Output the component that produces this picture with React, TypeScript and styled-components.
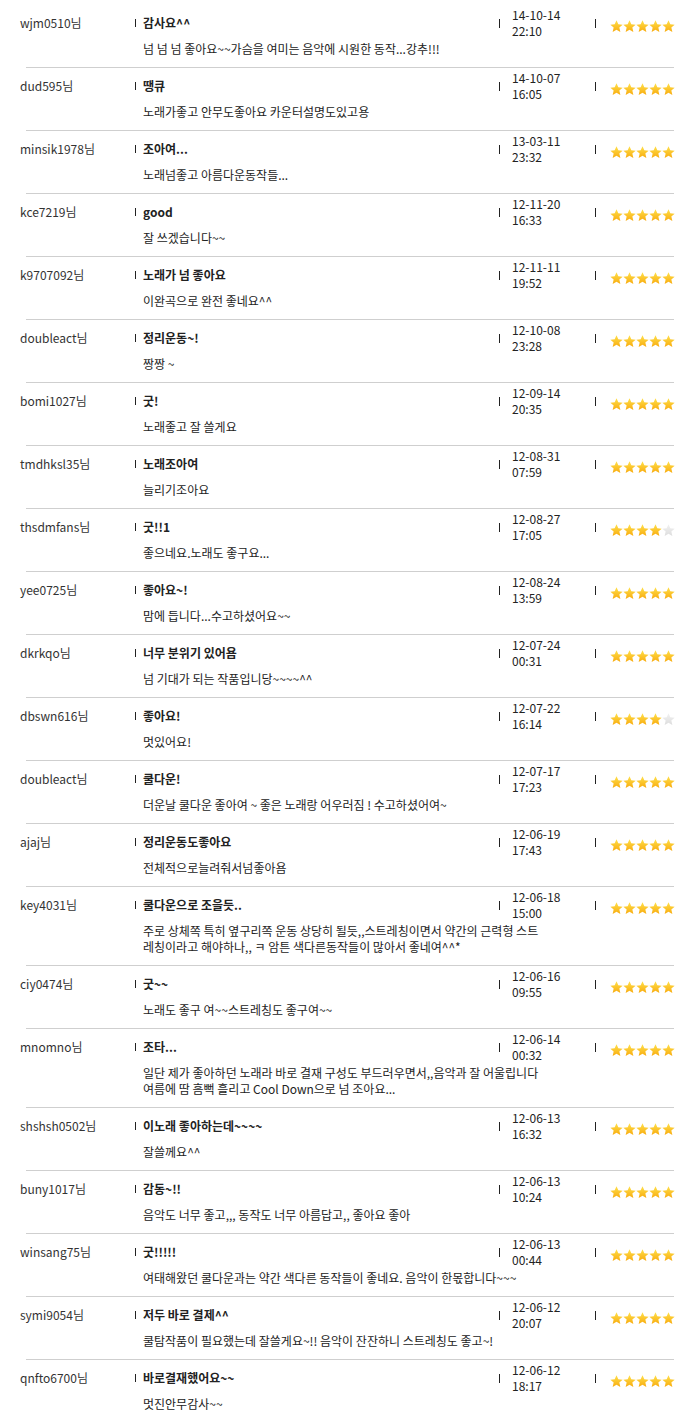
import React from "react";
import styled, { createGlobalStyle } from "styled-components";

const GlobalStyle = createGlobalStyle`
  html, body { margin: 0; padding: 0; background: #fff; }
  body {
    font-family: "Noto Sans CJK KR", "Noto Sans", sans-serif;
    font-size: 12px;
    color: #333;
  }
`;

type Review = {
  user: string;
  title: string;
  date: string;
  time: string;
  stars: number;
  lines: string[];
};

const reviews: Review[] = [
  { user: "wjm0510님", title: "감사요^^", date: "14-10-14", time: "22:10", stars: 5, lines: ["넘 넘 넘 좋아요~~가슴을 여미는 음악에 시원한 동작...강추!!!"] },
  { user: "dud595님", title: "땡큐", date: "14-10-07", time: "16:05", stars: 5, lines: ["노래가좋고 안무도좋아요 카운터설명도있고용"] },
  { user: "minsik1978님", title: "조아여...", date: "13-03-11", time: "23:32", stars: 5, lines: ["노래넘좋고 아름다운동작들..."] },
  { user: "kce7219님", title: "good", date: "12-11-20", time: "16:33", stars: 5, lines: ["잘 쓰겠습니다~~"] },
  { user: "k9707092님", title: "노래가 넘 좋아요", date: "12-11-11", time: "19:52", stars: 5, lines: ["이완곡으로 완전 좋네요^^"] },
  { user: "doubleact님", title: "정리운동~!", date: "12-10-08", time: "23:28", stars: 5, lines: ["짱짱 ~"] },
  { user: "bomi1027님", title: "굿!", date: "12-09-14", time: "20:35", stars: 5, lines: ["노래좋고 잘 쓸게요"] },
  { user: "tmdhksl35님", title: "노래조아여", date: "12-08-31", time: "07:59", stars: 5, lines: ["늘리기조아요"] },
  { user: "thsdmfans님", title: "굿!!1", date: "12-08-27", time: "17:05", stars: 4, lines: ["좋으네요.노래도 좋구요..."] },
  { user: "yee0725님", title: "좋아요~!", date: "12-08-24", time: "13:59", stars: 5, lines: ["맘에 듭니다...수고하셨어요~~"] },
  { user: "dkrkqo님", title: "너무 분위기 있어욤", date: "12-07-24", time: "00:31", stars: 5, lines: ["넘 기대가 되는 작품입니당~~~~^^"] },
  { user: "dbswn616님", title: "좋아요!", date: "12-07-22", time: "16:14", stars: 4, lines: ["멋있어요!"] },
  { user: "doubleact님", title: "쿨다운!", date: "12-07-17", time: "17:23", stars: 5, lines: ["더운날 쿨다운 좋아여 ~ 좋은 노래랑 어우러짐 ! 수고하셨어여~"] },
  { user: "ajaj님", title: "정리운동도좋아요", date: "12-06-19", time: "17:43", stars: 5, lines: ["전체적으로늘려줘서넘좋아욤"] },
  { user: "key4031님", title: "쿨다운으로 조을듯..", date: "12-06-18", time: "15:00", stars: 5, lines: ["주로 상체쪽 특히 옆구리쪽 운동 상당히 될듯,,스트레칭이면서 약간의 근력형 스트", "레칭이라고 해야하나,, ㅋ 암튼 색다른동작들이 많아서 좋네여^^*"] },
  { user: "ciy0474님", title: "굿~~", date: "12-06-16", time: "09:55", stars: 5, lines: ["노래도 좋구 여~~스트레칭도 좋구여~~"] },
  { user: "mnomno님", title: "조타...", date: "12-06-14", time: "00:32", stars: 5, lines: ["일단 제가 좋아하던 노래라 바로 결재 구성도 부드러우면서,,음악과 잘 어울립니다", "여름에 땀 흠뻑 흘리고 Cool Down으로 넘 조아요..."] },
  { user: "shshsh0502님", title: "이노래 좋아하는데~~~~", date: "12-06-13", time: "16:32", stars: 5, lines: ["잘쓸께요^^"] },
  { user: "buny1017님", title: "감동~!!", date: "12-06-13", time: "10:24", stars: 5, lines: ["음악도 너무 좋고,,, 동작도 너무 아름답고,, 좋아요 좋아"] },
  { user: "winsang75님", title: "굿!!!!!", date: "12-06-13", time: "00:44", stars: 5, lines: ["여태해왔던 쿨다운과는 약간 색다른 동작들이 좋네요. 음악이 한몫합니다~~~"] },
  { user: "symi9054님", title: "저두 바로 결제^^", date: "12-06-12", time: "20:07", stars: 5, lines: ["쿨탐작품이 필요했는데 잘쓸게요~!! 음악이 잔잔하니 스트레칭도 좋고~!"] },
  { user: "qnfto6700님", title: "바로결재했어요~~", date: "12-06-12", time: "18:17", stars: 5, lines: ["멋진안무감사~~"] },
];

const List = styled.div`
  display: flex;
  flex-direction: column;
  padding-top: 5px;
  width: 687px;
`;

const Divider = styled.div`
  height: 1px;
  background: #cfcfcf;
  margin: 0 13px 0 26px;
`;

const Item = styled.div`
  display: grid;
  grid-template-columns: 115px 364px 96px 1fr;
  grid-template-rows: 32px auto;
  row-gap: 2px;
  padding: 2px 0 10px 20px;
  line-height: 16px;
`;

const User = styled.div`
  grid-column: 1;
  grid-row: 1;
  align-self: center;
  color: #333;
  white-space: nowrap;
`;

const Bar = styled.span<{ $h: number }>`
  display: inline-block;
  width: 1px;
  height: ${(p) => p.$h}px;
  background: #222;
  flex: none;
`;

const TitleCell = styled.div`
  grid-column: 2;
  grid-row: 1;
  display: flex;
  align-items: center;
  gap: 7px;
  font-weight: 700;
  color: #222;
  white-space: nowrap;
`;

const DateCell = styled.div`
  grid-column: 3;
  grid-row: 1;
  display: flex;
  align-items: center;
  gap: 12px;
`;

const DateText = styled.div`
  display: flex;
  flex-direction: column;
  color: #222;
  white-space: nowrap;
`;

const StarCell = styled.div`
  grid-column: 4;
  grid-row: 1;
  display: flex;
  align-items: center;
  gap: 14px;
`;

const Stars = styled.div`
  display: flex;
  gap: 0;
  margin-top: 6px;
`;

const Comment = styled.div`
  grid-column: 2 / 5;
  grid-row: 2;
  padding-left: 8px;
  color: #222;
  white-space: nowrap;
`;

const Star: React.FC<{ on: boolean; id: string }> = ({ on, id }) => (
  <svg width="13" height="13" viewBox="0 0 26 26">
    <defs>
      <linearGradient id={id} x1="0" y1="0" x2="0" y2="1">
        <stop offset="0" stopColor={on ? "#ffe04a" : "#f2f2f2"} />
        <stop offset="1" stopColor={on ? "#f8ac10" : "#dddddd"} />
      </linearGradient>
    </defs>
    <polygon
      points="13,0.5 16.6,8.6 25.3,9.4 18.7,15.2 20.7,23.9 13,19.3 5.3,23.9 7.3,15.2 0.7,9.4 9.4,8.6"
      fill={`url(#${id})`}
    />
  </svg>
);

export default function App() {
  return (
    <>
      <GlobalStyle />
      <List>
        {reviews.map((r, i) => (
          <React.Fragment key={i}>
            {i > 0 && <Divider />}
            <Item>
              <User>{r.user}</User>
              <TitleCell>
                <Bar $h={8} />
                <span>{r.title}</span>
              </TitleCell>
              <DateCell>
                <Bar $h={9} />
                <DateText>
                  <span>{r.date}</span>
                  <span>{r.time}</span>
                </DateText>
              </DateCell>
              <StarCell>
                <Bar $h={9} />
                <Stars>
                  {[0, 1, 2, 3, 4].map((s) => (
                    <Star key={s} on={s < r.stars} id={`g${i}-${s}`} />
                  ))}
                </Stars>
              </StarCell>
              <Comment>
                {r.lines.map((l, k) => (
                  <div key={k}>{l}</div>
                ))}
              </Comment>
            </Item>
          </React.Fragment>
        ))}
      </List>
    </>
  );
}
